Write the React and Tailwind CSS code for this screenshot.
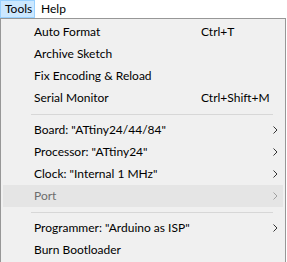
import React from "react";

const items = [
  { label: "Auto Format", shortcut: "Ctrl+T" },
  { label: "Archive Sketch" },
  { label: "Fix Encoding & Reload" },
  { label: "Serial Monitor", shortcut: "Ctrl+Shift+M" },
  { sep: true },
  { label: 'Board: "ATtiny24/44/84"', sub: true },
  { label: 'Processor: "ATtiny24"', sub: true },
  { label: 'Clock: "Internal 1 MHz"', sub: true },
  { label: "Port", sub: true, disabled: true },
  { sep: true },
  { label: 'Programmer: "Arduino as ISP"', sub: true },
  { label: "Burn Bootloader" },
];

function Chevron({ color }) {
  return (
    <svg width="5" height="8" viewBox="0 0 5 8" className="block">
      <path d="M0.5 0.5 L4 4 L0.5 7.5" fill="none" stroke={color} strokeWidth="1" />
    </svg>
  );
}

export default function App() {
  return (
    <div
      className="w-[287px] h-[262px] overflow-hidden bg-white text-black text-[12px]"
      style={{ fontFamily: 'Lato, "Noto Sans", sans-serif' }}
    >
      <div className="flex h-[18px] items-stretch">
        <div className="flex items-center px-[4px] w-[35px] bg-[#cce8ff] border border-[#99d1ff]">
          Tools
        </div>
        <div className="flex items-center px-[6px]">Help</div>
      </div>
      <div className="w-[286px] h-[260px] border border-[#979797] bg-[#f0f0f0] px-[2px] pt-[2px]">
        {items.map((it, i) =>
          it.sep ? (
            <div key={i} className="h-[10px] flex items-center pl-[28px] pr-[10px]">
              <div className="h-px w-full bg-[#d7d7d7]" />
            </div>
          ) : (
            <div
              key={i}
              className={`h-[22px] flex items-center pl-[31px] pr-[5px] ${
                it.disabled ? "bg-[#e5e5e5] text-[#6d6d6d]" : ""
              }`}
            >
              <span className="flex-1 whitespace-nowrap">{it.label}</span>
              {it.shortcut && (
                <span className="w-[77px] whitespace-nowrap">{it.shortcut}</span>
              )}
              {it.sub && <Chevron color={it.disabled ? "#a0a0a0" : "#333"} />}
            </div>
          )
        )}
      </div>
    </div>
  );
}
